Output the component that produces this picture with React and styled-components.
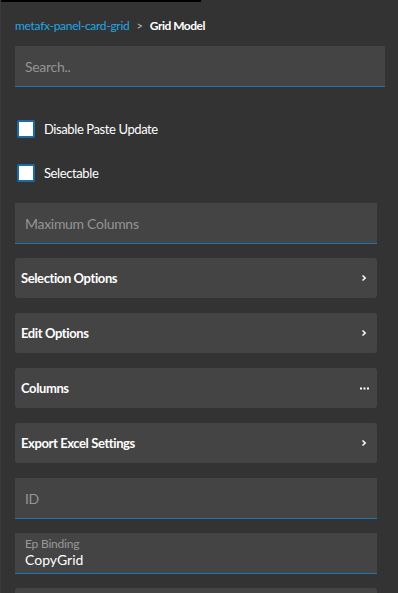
import React from 'react';
import styled, { createGlobalStyle } from 'styled-components';

const GlobalStyle = createGlobalStyle`
  html, body {
    margin: 0;
    padding: 0;
    background: #333333;
  }
  body {
    font-family: Lato, "Noto Sans", sans-serif;
    color: #ffffff;
  }
`;

const StyledPanel = styled.div`
  position: relative;
  width: 398px;
  height: 593px;
  overflow: hidden;
  box-sizing: border-box;
  background: #333333;
  border-left: 1px solid #3b3b3b;
`;

const StyledTopBar = styled.div`
  position: absolute;
  top: 0;
  left: 0;
  width: 200px;
  height: 2px;
  background: #000000;
`;

const StyledContent = styled.div`
  display: flex;
  flex-direction: column;
  padding: 17px 13px 0 14px;
`;

const StyledBreadcrumb = styled.div`
  display: flex;
  align-items: center;
  gap: 7px;
  font-size: 12px;
  height: 16px;
`;

const StyledCrumbLink = styled.span`
  color: #1ea8e6;
  letter-spacing: -0.3px;
`;

const StyledCrumbSep = styled.span`
  color: #bbbbbb;
  font-size: 11px;
`;

const StyledCrumbCurrent = styled.span`
  color: #ffffff;
  font-weight: 700;
  letter-spacing: -0.5px;
`;

const StyledInput = styled.div`
  display: flex;
  flex-direction: column;
  justify-content: ${p => (p.$filled ? 'flex-start' : 'center')};
  box-sizing: border-box;
  height: 41px;
  padding: ${p => (p.$filled ? '4px 10px 0' : '0 10px')};
  background: #444444;
  border-bottom: 1px solid #1976b3;
  margin-right: ${p => (p.$wide ? '0' : '8px')};
  margin-top: ${p => p.$top || 0}px;
`;

const StyledPlaceholder = styled.span`
  color: #959595;
  font-size: 14px;
  letter-spacing: -0.3px;
`;

const StyledFloatLabel = styled.span`
  color: #999999;
  font-size: 12px;
  line-height: 14px;
  letter-spacing: -0.2px;
`;

const StyledValue = styled.span`
  color: #ffffff;
  font-size: 14px;
  line-height: 17px;
`;

const StyledCheckRow = styled.label`
  display: flex;
  align-items: center;
  gap: 9px;
  padding-left: 2px;
  margin-top: ${p => p.$top}px;
  font-size: 13px;
  letter-spacing: -0.4px;
  color: #ffffff;
`;

const StyledCheckBox = styled.span`
  box-sizing: border-box;
  width: 18px;
  height: 18px;
  border: 2px solid #1a6da3;
  border-radius: 2px;
  background: #ffffff;
`;

const StyledGroup = styled.div`
  display: flex;
  align-items: center;
  justify-content: space-between;
  height: 40px;
  margin: ${p => p.$top || 15}px 8px 0 0;
  padding: 0 10px 0 6px;
  border-radius: 3px;
  background: #444444;
  font-size: 13px;
  font-weight: 700;
  letter-spacing: -0.4px;
  color: #ffffff;
`;

const StyledGroupIcon = styled.span`
  display: flex;
  align-items: center;
  margin-right: ${p => (p.$dots ? '-2px' : '0')};
`;

const Chevron = () => (
  <svg width="6" height="8" viewBox="0 0 6 8">
    <path d="M1.5 1.5 L4.2 4 L1.5 6.5" stroke="#ffffff" strokeWidth="1.5" fill="none" />
  </svg>
);

const Dots = () => (
  <svg width="9" height="3" viewBox="0 0 9 3">
    <rect x="0" y="0.5" width="2" height="2" fill="#ffffff" />
    <rect x="3.5" y="0.5" width="2" height="2" fill="#ffffff" />
    <rect x="7" y="0.5" width="2" height="2" fill="#ffffff" />
  </svg>
);

const groups = [
  { label: 'Selection Options', icon: 'chevron', top: 14 },
  { label: 'Edit Options', icon: 'chevron' },
  { label: 'Columns', icon: 'dots' },
  { label: 'Export Excel Settings', icon: 'chevron' },
];

const App = () => (
  <React.Fragment>
    <GlobalStyle />
    <StyledPanel>
      <StyledTopBar />
      <StyledContent>
        <StyledBreadcrumb>
          <StyledCrumbLink>metafx-panel-card-grid</StyledCrumbLink>
          <StyledCrumbSep>&gt;</StyledCrumbSep>
          <StyledCrumbCurrent>Grid Model</StyledCrumbCurrent>
        </StyledBreadcrumb>
        <StyledInput $wide $top={13}>
          <StyledPlaceholder>Search..</StyledPlaceholder>
        </StyledInput>
        <StyledCheckRow $top={33}>
          <StyledCheckBox />
          Disable Paste Update
        </StyledCheckRow>
        <StyledCheckRow $top={26}>
          <StyledCheckBox />
          Selectable
        </StyledCheckRow>
        <StyledInput $top={21}>
          <StyledPlaceholder>Maximum Columns</StyledPlaceholder>
        </StyledInput>
        {groups.map(group => (
          <StyledGroup key={group.label} $top={group.top}>
            {group.label}
            <StyledGroupIcon $dots={group.icon === 'dots'}>
              {group.icon === 'dots' ? <Dots /> : <Chevron />}
            </StyledGroupIcon>
          </StyledGroup>
        ))}
        <StyledInput $top={15}>
          <StyledPlaceholder>ID</StyledPlaceholder>
        </StyledInput>
        <StyledInput $top={14} $filled>
          <StyledFloatLabel>Ep Binding</StyledFloatLabel>
          <StyledValue>CopyGrid</StyledValue>
        </StyledInput>
        <StyledGroup $top={14} />
      </StyledContent>
    </StyledPanel>
  </React.Fragment>
);

export default App;
